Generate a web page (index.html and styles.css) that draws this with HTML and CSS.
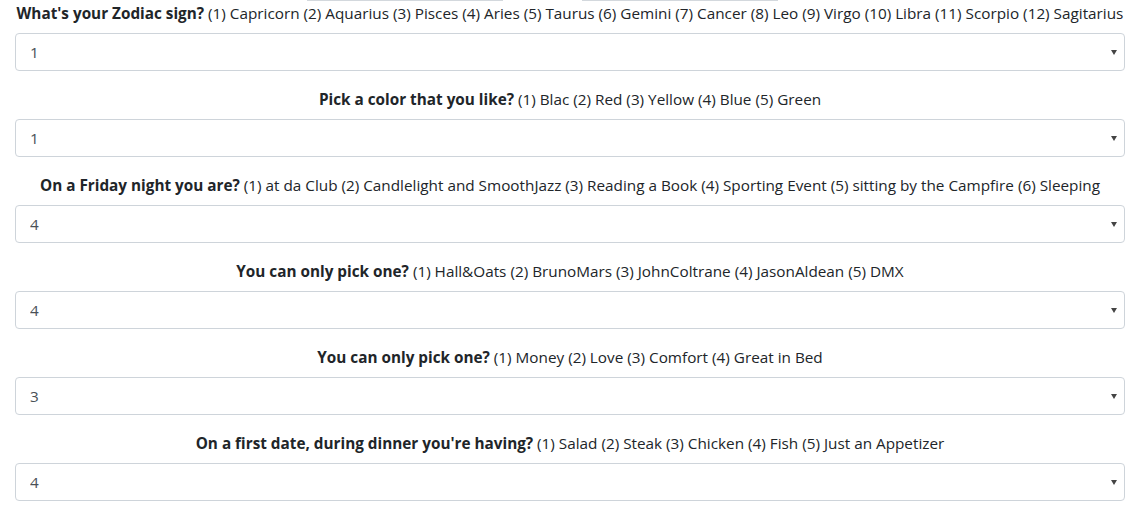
FILE: index.html
```html
<!DOCTYPE html>
<html lang="en">
<head>
<meta charset="utf-8">
<title>Quiz</title>
<link rel="stylesheet" href="styles.css">
</head>
<body>
<div class="top-strip"><span class="strip-a"></span><span class="strip-b"></span></div>
<form class="quiz">
  <div class="form-group">
    <label class="q-label"><b>What's your Zodiac sign?</b> (1) Capricorn (2) Aquarius (3) Pisces (4) Aries (5) Taurus (6) Gemini (7) Cancer (8) Leo (9) Virgo (10) Libra (11) Scorpio (12) Sagitarius</label>
    <div class="select-wrap"><select class="form-control"><option selected>1</option><option>2</option><option>3</option><option>4</option><option>5</option><option>6</option><option>7</option><option>8</option><option>9</option><option>10</option><option>11</option><option>12</option></select></div>
  </div>
  <div class="form-group">
    <label class="q-label"><b>Pick a color that you like?</b> (1) Blac (2) Red (3) Yellow (4) Blue (5) Green</label>
    <div class="select-wrap"><select class="form-control"><option selected>1</option><option>2</option><option>3</option><option>4</option><option>5</option></select></div>
  </div>
  <div class="form-group">
    <label class="q-label"><b>On a Friday night you are?</b> (1) at da Club (2) Candlelight and SmoothJazz (3) Reading a Book (4) Sporting Event (5) sitting by the Campfire (6) Sleeping</label>
    <div class="select-wrap"><select class="form-control"><option>1</option><option>2</option><option>3</option><option selected>4</option><option>5</option><option>6</option></select></div>
  </div>
  <div class="form-group">
    <label class="q-label"><b>You can only pick one?</b> (1) Hall&amp;Oats (2) BrunoMars (3) JohnColtrane (4) JasonAldean (5) DMX</label>
    <div class="select-wrap"><select class="form-control"><option>1</option><option>2</option><option>3</option><option selected>4</option><option>5</option></select></div>
  </div>
  <div class="form-group">
    <label class="q-label"><b>You can only pick one?</b> (1) Money (2) Love (3) Comfort (4) Great in Bed</label>
    <div class="select-wrap"><select class="form-control"><option>1</option><option>2</option><option selected>3</option><option>4</option></select></div>
  </div>
  <div class="form-group">
    <label class="q-label"><b>On a first date, during dinner you're having?</b> (1) Salad (2) Steak (3) Chicken (4) Fish (5) Just an Appetizer</label>
    <div class="select-wrap"><select class="form-control"><option>1</option><option>2</option><option>3</option><option selected>4</option><option>5</option></select></div>
  </div>
</form>
</body>
</html>
```
FILE: styles.css
```css
html, body {
  margin: 0;
  padding: 0;
  background: #fff;
}
body {
  font-family: "Open Sans", "Noto Sans", sans-serif;
  font-size: 15.3px;
  line-height: 24px;
  color: #212529;
}
.top-strip {
  display: flex;
  height: 1px;
  padding-left: 307px;
  gap: 79px;
}
.strip-a, .strip-b {
  display: block;
  width: 196px;
  height: 1px;
  background: #d3d8dd;
}
.quiz {
  padding: 0 18px 0 15px;
}
.form-group {
  margin-bottom: 16px;
}
.q-label {
  display: block;
  text-align: center;
  margin-bottom: 8px;
  white-space: nowrap;
}
.q-label b {
  font-weight: 700;
}
.select-wrap {
  position: relative;
}
.select-wrap::after {
  content: "";
  position: absolute;
  right: 8px;
  top: 17px;
  border-left: 3px solid transparent;
  border-right: 3px solid transparent;
  border-top: 5px solid #444;
  pointer-events: none;
}
.form-control {
  display: block;
  width: 100%;
  height: 38px;
  box-sizing: border-box;
  padding: 6px 12px 6px 14px;
  font-family: inherit;
  font-size: 15.3px;
  line-height: 24px;
  color: #495057;
  background: #fff;
  border: 1px solid #ced4da;
  border-radius: 4px;
  -webkit-appearance: none;
  appearance: none;
  outline: none;
}
```
